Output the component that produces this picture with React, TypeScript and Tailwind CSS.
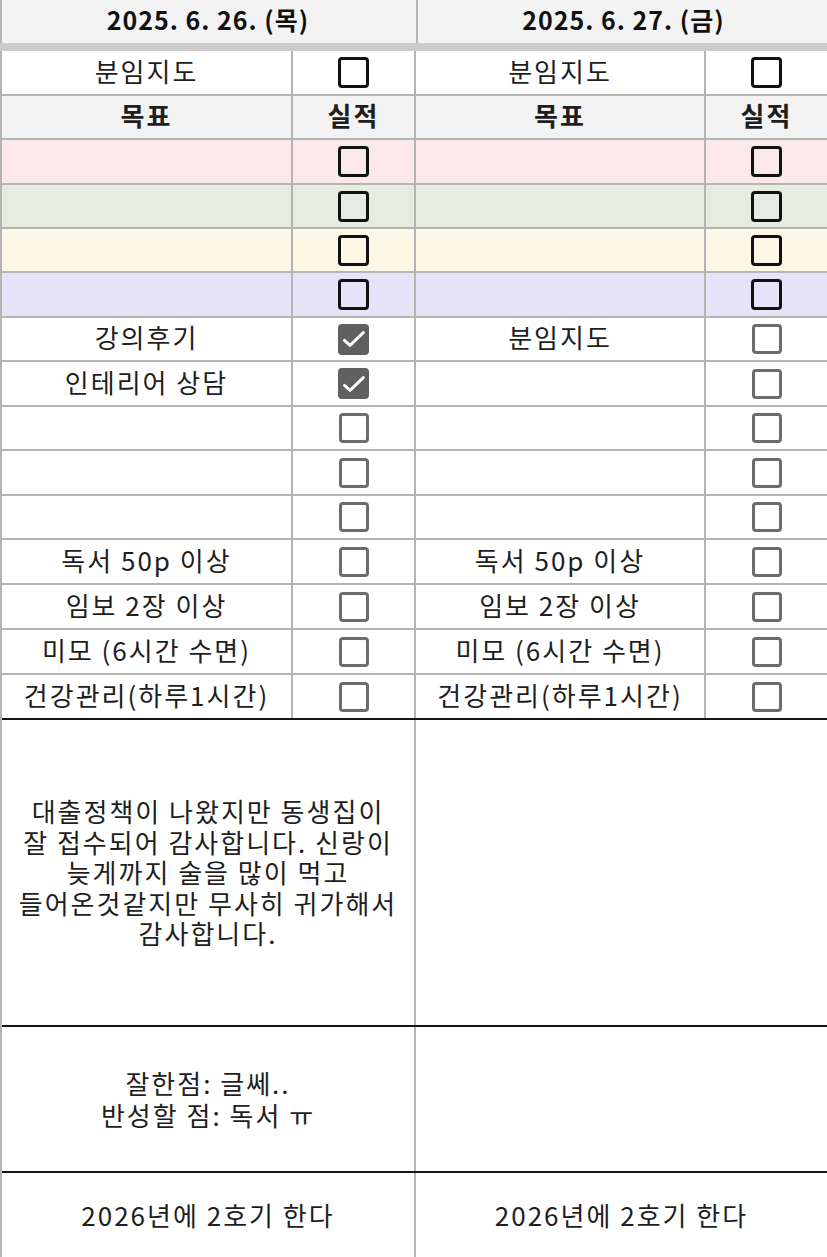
import React from 'react';

type Mark = 'bold' | 'empty' | 'checked';

interface Row {
  left: string;
  leftMark: Mark;
  right: string;
  rightMark: Mark;
  h: number;
  bg?: string;
  head?: boolean;
  last?: boolean;
}

const FONT = '"Noto Sans CJK KR", "Malgun Gothic", sans-serif';

const rows: Row[] = [
  { left: '분임지도', leftMark: 'bold', right: '분임지도', rightMark: 'bold', h: 45 },
  { left: '목표', leftMark: 'empty', right: '목표', rightMark: 'empty', h: 44, head: true },
  { left: '', leftMark: 'bold', right: '', rightMark: 'bold', h: 45, bg: 'bg-[#fae9e8]' },
  { left: '', leftMark: 'bold', right: '', rightMark: 'bold', h: 44, bg: 'bg-[#e6ecdf]' },
  { left: '', leftMark: 'bold', right: '', rightMark: 'bold', h: 44, bg: 'bg-[#fdf7e5]' },
  { left: '', leftMark: 'bold', right: '', rightMark: 'bold', h: 45, bg: 'bg-[#e6e3f6]' },
  { left: '강의후기', leftMark: 'checked', right: '분임지도', rightMark: 'empty', h: 44 },
  { left: '인테리어 상담', leftMark: 'checked', right: '', rightMark: 'empty', h: 45 },
  { left: '', leftMark: 'empty', right: '', rightMark: 'empty', h: 44 },
  { left: '', leftMark: 'empty', right: '', rightMark: 'empty', h: 45 },
  { left: '', leftMark: 'empty', right: '', rightMark: 'empty', h: 44 },
  { left: '독서 50p 이상', leftMark: 'empty', right: '독서 50p 이상', rightMark: 'empty', h: 45 },
  { left: '임보 2장 이상', leftMark: 'empty', right: '임보 2장 이상', rightMark: 'empty', h: 45 },
  { left: '미모 (6시간 수면)', leftMark: 'empty', right: '미모 (6시간 수면)', rightMark: 'empty', h: 45 },
  { left: '건강관리(하루1시간)', leftMark: 'empty', right: '건강관리(하루1시간)', rightMark: 'empty', h: 45, last: true },
];

function Box({ mark }: { mark: Mark }) {
  if (mark === 'bold') {
    return <div className="w-[31px] h-[31px] rounded-[4px] border-[3px] border-[#111]" />;
  }
  if (mark === 'checked') {
    return (
      <div className="w-[31px] h-[31px] rounded-[4px] bg-[#606060] flex items-center justify-center">
        <svg viewBox="0 0 24 24" className="w-[28px] h-[28px]" fill="none" stroke="white" strokeWidth="2.5" strokeLinecap="round" strokeLinejoin="round">
          <path d="M3.8 13.2l4.8 4.3L20 6.5" />
        </svg>
      </div>
    );
  }
  return <div className="w-[30px] h-[30px] rounded-[4px] border-[3px] border-[#6c6c6c]" />;
}

function Cell({ children, className = '' }: { children?: React.ReactNode; className?: string }) {
  return (
    <div className={`flex items-center justify-center border-r-2 border-[#b4b4b4] ${className}`}>
      {children}
    </div>
  );
}

export default function App() {
  return (
    <div
      className="w-[827px] h-[1257px] overflow-hidden bg-white text-[#1e1e1e] text-[26px] tracking-[2px] whitespace-nowrap"
      style={{ fontFamily: FONT }}
    >
      {/* date header */}
      <div className="grid grid-cols-[416px_411px] h-[43px] bg-[#f3f3f3] border-l-2 border-[#b4b4b4]">
        <div className="flex items-center justify-center border-r-2 border-[#b4b4b4] text-[25px] tracking-[1px] font-bold text-[#111] -ml-[2px] pb-[4px]">
          2025. 6. 26. (목)
        </div>
        <div className="flex items-center justify-center text-[25px] tracking-[1px] font-bold text-[#111] pb-[4px]">
          2025. 6. 27. (금)
        </div>
      </div>
      <div className="h-[8px] bg-[#cbcbcb]" />

      {/* checklist rows */}
      <div className="border-l-2 border-[#b4b4b4]">
        {rows.map((r, i) => (
          <div
            key={i}
            className={`grid grid-cols-[291px_123px_290px_121px] border-b-2 ${r.last ? 'border-[#151515]' : 'border-[#b4b4b4]'} ${r.bg ?? ''} ${r.head ? 'bg-[#f3f3f3] font-bold' : ''}`}
            style={{ height: r.h }}
          >
            <Cell className="leading-none pb-[4px]">{r.left}</Cell>
            <Cell className="leading-none">
              {r.head ? <span className="pb-[4px]">실적</span> : <Box mark={r.leftMark} />}
            </Cell>
            <Cell className="leading-none pb-[4px]">{r.right}</Cell>
            <div className="flex items-center justify-center leading-none">
              {r.head ? <span className="pb-[4px]">실적</span> : <Box mark={r.rightMark} />}
            </div>
          </div>
        ))}
      </div>

      {/* notes */}
      <div className="border-l-2 border-[#b4b4b4]">
        <div className="grid grid-cols-[414px_411px] h-[307px] border-b-2 border-[#151515]">
          <Cell className="leading-[30.5px] text-center">
            <p>
              대출정책이 나왔지만 동생집이
              <br />
              잘 접수되어 감사합니다. 신랑이
              <br />
              늦게까지 술을 많이 먹고
              <br />
              들어온것같지만 무사히 귀가해서
              <br />
              감사합니다.
            </p>
          </Cell>
          <div />
        </div>
        <div className="grid grid-cols-[414px_411px] h-[146px] border-b-2 border-[#151515]">
          <Cell className="leading-[32px] text-center">
            <p>
              잘한점: 글쎄..
              <br />
              반성할 점: 독서 ㅠ
            </p>
          </Cell>
          <div />
        </div>
        <div className="grid grid-cols-[414px_411px] h-[90px]">
          <Cell className="leading-none pb-[6px]">2026년에 2호기 한다</Cell>
          <div className="flex items-center justify-center leading-none pb-[6px]">2026년에 2호기 한다</div>
        </div>
      </div>
    </div>
  );
}
